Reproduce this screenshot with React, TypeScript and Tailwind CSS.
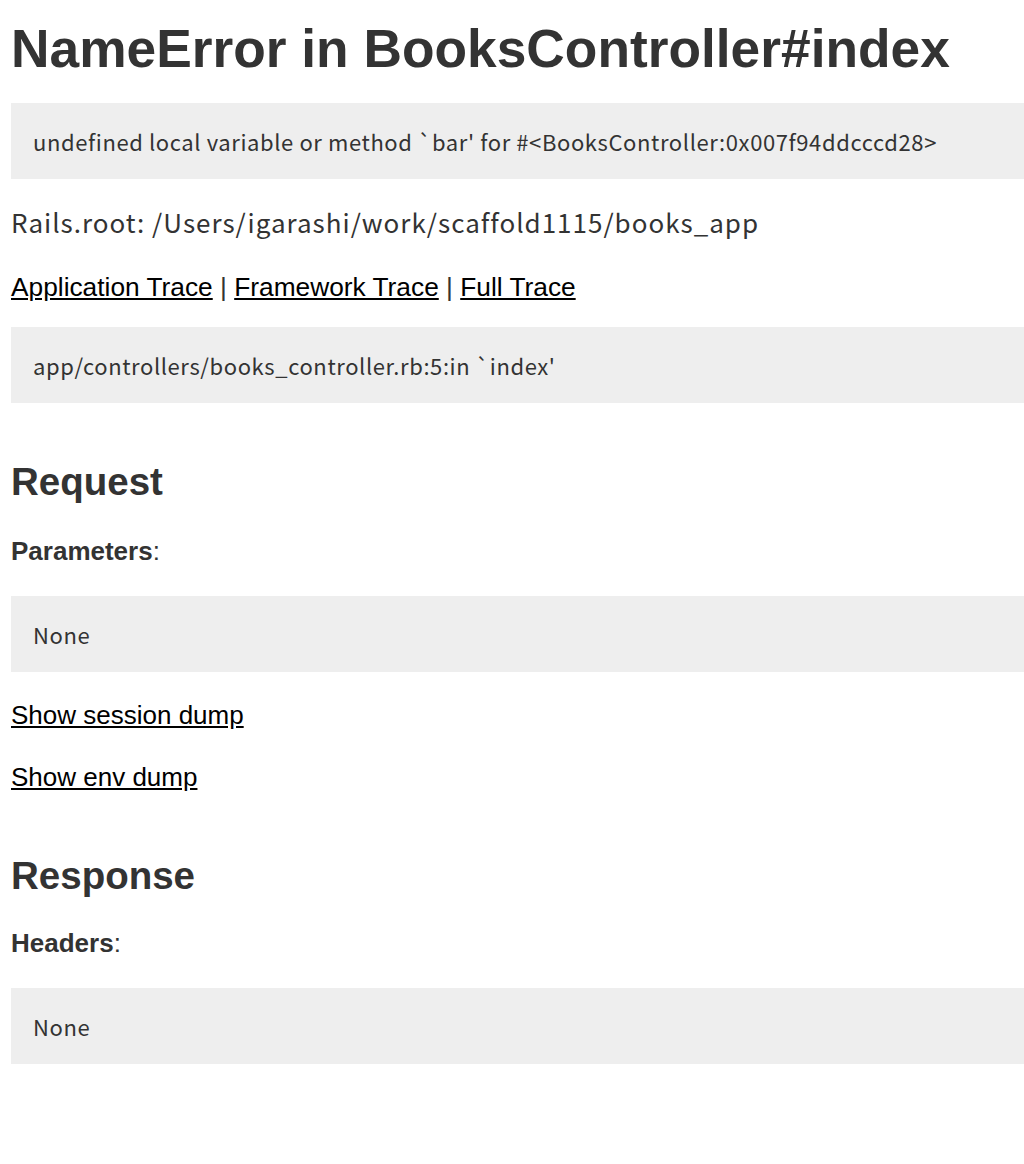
import React from "react";

const sans = { fontFamily: '"Liberation Sans", Arial, sans-serif' };

function Pre({ children }: { children: React.ReactNode }) {
  return (
    <div className="bg-[#eeeeee] h-[76px] pl-[22px] pb-[1px] flex items-center whitespace-pre text-[22px] leading-[36px] tracking-[0.6px] font-['Noto_Sans_CJK_JP',sans-serif] text-[#333333]">
      {children}
    </div>
  );
}

export default function App() {
  return (
    <div className="min-h-[1164px] bg-white text-[#333333] pl-[11px] overflow-hidden" style={sans}>
      <h1 className="mt-[19px] h-[60px] leading-[60px] text-[53.3px] font-bold whitespace-nowrap">
        NameError in BooksController#index
      </h1>
      <div className="mt-[24px] -mr-[40px]">
        <Pre>undefined local variable or method `bar' for #&lt;BooksController:0x007f94ddcccd28&gt;</Pre>
      </div>
      <p className="mt-[23px] h-[40px] leading-[40px] text-[26px] tracking-[1px] font-['Noto_Sans_CJK_JP',sans-serif] whitespace-nowrap">
        Rails.root: /Users/igarashi/work/scaffold1115/books_app
      </p>
      <p className="mt-[25px] h-[40px] leading-[40px] text-[26.3px] whitespace-nowrap">
        <a href="#" className="text-black underline">Application Trace</a> |{" "}
        <a href="#" className="text-black underline">Framework Trace</a> |{" "}
        <a href="#" className="text-black underline">Full Trace</a>
      </p>
      <div className="mt-[20px] -mr-[40px]">
        <Pre>app/controllers/books_controller.rb:5:in `index'</Pre>
      </div>
      <h2 className="mt-[57px] h-[44px] leading-[44px] text-[38.5px] font-bold">Request</h2>
      <p className="mt-[29px] h-[36px] leading-[36px] text-[26px]">
        <b className="font-bold">Parameters</b>:
      </p>
      <div className="mt-[27px] -mr-[40px]">
        <Pre>None</Pre>
      </div>
      <p className="mt-[25px] h-[36px] leading-[36px] text-[26px]">
        <a href="#" className="text-black underline">Show session dump</a>
      </p>
      <p className="mt-[26px] h-[36px] leading-[36px] text-[26px]">
        <a href="#" className="text-black underline">Show env dump</a>
      </p>
      <h2 className="mt-[59px] h-[44px] leading-[44px] text-[38.5px] font-bold">Response</h2>
      <p className="mt-[27px] h-[36px] leading-[36px] text-[26px]">
        <b className="font-bold">Headers</b>:
      </p>
      <div className="mt-[27px] -mr-[40px]">
        <Pre>None</Pre>
      </div>
    </div>
  );
}
